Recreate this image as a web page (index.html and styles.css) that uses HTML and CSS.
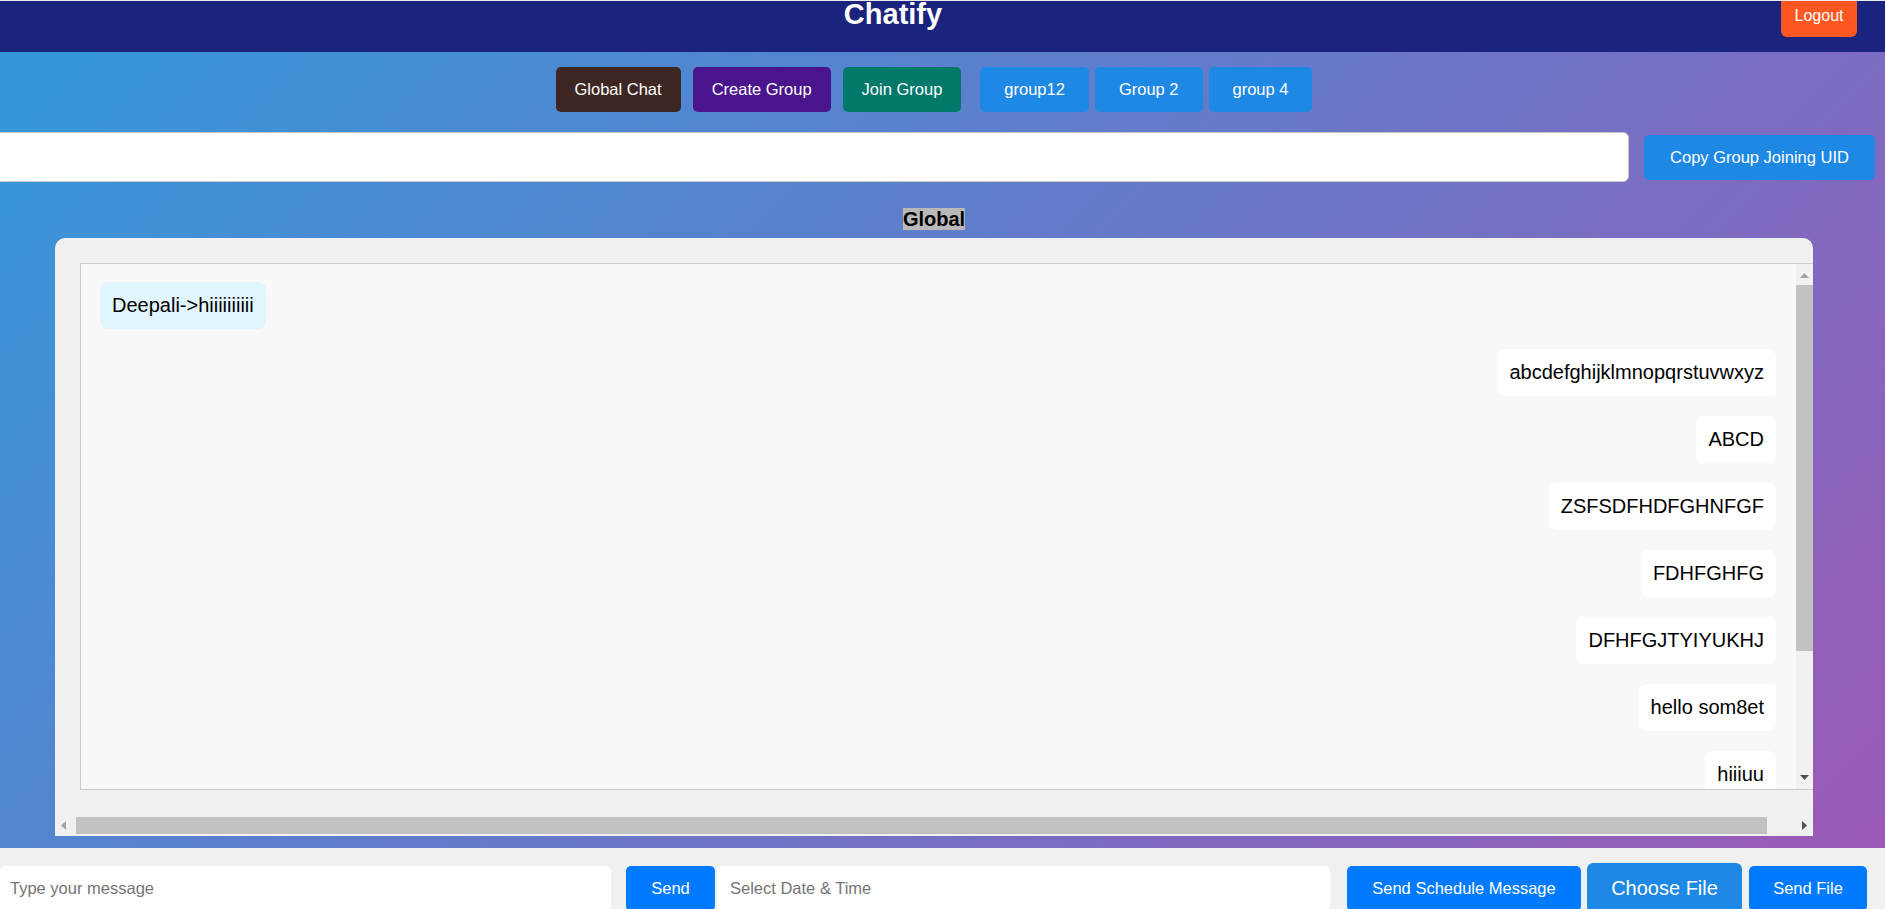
FILE: index.html
```html
<!DOCTYPE html>
<html lang="en">
<head>
<meta charset="utf-8">
<title>Chatify</title>
<link rel="stylesheet" href="styles.css">
</head>
<body>
<header class="topbar">
  <h1 class="brand">Chatify</h1>
  <button class="logout-btn">Logout</button>
</header>

<section class="workspace">
  <div class="main">
    <nav class="room-nav">
      <div class="nav-actions">
        <button class="btn btn-action btn-global">Global Chat</button>
        <button class="btn btn-action btn-create">Create Group</button>
        <button class="btn btn-action btn-join">Join Group</button>
      </div>
      <div class="nav-groups">
        <button class="btn btn-group">group12</button>
        <button class="btn btn-group">Group 2</button>
        <button class="btn btn-group">group 4</button>
      </div>
    </nav>

    <div class="uid-row">
      <input class="uid-input" type="text">
      <button class="btn btn-copy">Copy Group Joining UID</button>
    </div>

    <div class="room-title"><span>Global</span></div>

    <div class="chat-card">
      <div class="chat-viewport">
        <div class="chat-frame">
          <div class="messages">
            <div class="msg msg-in">Deepali-&gt;hiiiiiiiiii</div>
            <div class="msg">abcdefghijklmnopqrstuvwxyz</div>
            <div class="msg">ABCD</div>
            <div class="msg">ZSFSDFHDFGHNFGF</div>
            <div class="msg">FDHFGHFG</div>
            <div class="msg">DFHFGJTYIYUKHJ</div>
            <div class="msg">hello som8et</div>
            <div class="msg">hiiiuu</div>
          </div>
          <div class="vscroll">
            <div class="vs-up"><span class="tri tri-up"></span></div>
            <div class="vs-thumb"></div>
            <div class="vs-space"></div>
            <div class="vs-down"><span class="tri tri-down"></span></div>
          </div>
        </div>
      </div>
      <div class="hscroll">
        <div class="hs-arrow"><span class="tri tri-left"></span></div>
        <div class="hs-thumb"></div>
        <div class="hs-space"></div>
        <div class="hs-arrow"><span class="tri tri-right"></span></div>
      </div>
    </div>
  </div>
</section>

<footer class="composer">
  <div class="composer-row">
    <input class="field msg-field" type="text" placeholder="Type your message">
    <button class="btn btn-send">Send</button>
    <input class="field date-field" type="text" placeholder="Select Date &amp; Time">
    <button class="btn btn-schedule">Send Schedule Message</button>
    <button class="btn btn-choose">Choose File</button>
    <button class="btn btn-sendfile">Send File</button>
  </div>
</footer>
</body>
</html>
```

FILE: styles.css
```css
* {
  box-sizing: border-box;
}

html,
body {
  margin: 0;
}

body {
  background: #f0f0f0;
  font-family: "Liberation Sans", Arial, sans-serif;
  overflow: hidden;
}

/* ---------- header ---------- */
.topbar {
  display: flex;
  align-items: flex-start;
  height: 52px;
  border-top: 1px solid #ececec;
  background: #1a237e;
}

.brand {
  flex: 1;
  margin: 0;
  padding-left: 5px;
  text-align: center;
  color: #fff;
  font-size: 29px;
  font-weight: bold;
  line-height: 26px;
}

.logout-btn {
  flex: none;
  margin-right: 28px;
  width: 76px;
  height: 36px;
  padding: 0 0 8px;
  border: none;
  border-radius: 0 0 6px 6px;
  background: #ff5722;
  color: #fff;
  font-family: inherit;
  font-size: 16px;
  line-height: 19px;
}

/* ---------- gradient workspace ---------- */
.workspace {
  background: linear-gradient(135deg, #3498db, #9b59b6);
  padding: 15px 0 12px;
}

.main {
  width: 1868px;
}

.btn {
  flex: none;
  height: 45px;
  padding: 0;
  border: none;
  border-radius: 5px;
  color: #fff;
  font-family: inherit;
  font-size: 16.5px;
  cursor: pointer;
}

.room-nav {
  display: flex;
  justify-content: center;
}

.nav-actions {
  display: flex;
  gap: 12px;
}

.nav-groups {
  display: flex;
  gap: 6px;
  margin-left: 19px;
}

.btn-action {
  padding: 0 19px;
}

.btn-global {
  background: #3e2723;
}

.btn-create {
  background: #4a148c;
}

.btn-join {
  background: #00796b;
}

.btn-group {
  padding: 0 24px;
  background: #1e88e5;
}

.uid-row {
  display: flex;
  justify-content: center;
  align-items: center;
  gap: 15px;
  margin-top: 20px;
}

.uid-input {
  flex: none;
  width: 1636px;
  height: 50px;
  border: 1px solid #c8c8c8;
  border-radius: 6px;
  background: #fff;
  outline: none;
}

.btn-copy {
  padding: 0 26px;
  background: #1e88e5;
}

.room-title {
  margin-top: 26px;
  text-align: center;
  font-size: 20px;
  font-weight: bold;
  line-height: 23px;
}

.room-title span {
  background: #b9b9b9;
  color: #000;
}

/* ---------- chat card ---------- */
.chat-card {
  display: flex;
  flex-direction: column;
  width: 1758px;
  height: 598px;
  margin: 7px auto 0;
  background: #f0f0f0;
  border-radius: 10px 10px 0 0;
  overflow: hidden;
}

.chat-viewport {
  flex: 1;
  overflow: hidden;
  padding: 25px 0 26px 25px;
}

.chat-frame {
  display: flex;
  width: 1734px;
  height: 527px;
  border: 1px solid #ccc;
  background: #f8f8f8;
}

.messages {
  flex: 1;
  display: flex;
  flex-direction: column;
  align-items: flex-end;
  gap: 20px;
  overflow: hidden;
  padding: 18px 20px 0 19px;
}

.msg {
  flex: none;
  padding: 12px;
  border-radius: 8px;
  background: #fff;
  color: #000;
  font-size: 20px;
  line-height: 23px;
  white-space: nowrap;
}

.msg-in {
  align-self: flex-start;
  background: #e1f5fe;
}

/* fake scrollbars */
.tri {
  display: block;
}

.tri-up {
  width: 9px;
  height: 5px;
  background: #a3a3a3;
  clip-path: polygon(50% 0, 100% 100%, 0 100%);
}

.tri-down {
  width: 9px;
  height: 5px;
  background: #505050;
  clip-path: polygon(0 0, 100% 0, 50% 100%);
}

.tri-left {
  width: 5px;
  height: 9px;
  background: #a3a3a3;
  clip-path: polygon(100% 0, 100% 100%, 0 50%);
}

.tri-right {
  width: 5px;
  height: 9px;
  background: #505050;
  clip-path: polygon(0 0, 100% 50%, 0 100%);
}

.vscroll {
  flex: none;
  display: flex;
  flex-direction: column;
  width: 17px;
  background: #f1f1f1;
}

.vs-up {
  display: flex;
  justify-content: center;
  height: 21px;
  padding-top: 9px;
}

.vs-thumb {
  height: 366px;
  background: #c1c1c1;
}

.vs-space {
  flex: 1;
}

.vs-down {
  display: flex;
  justify-content: center;
  height: 20px;
  padding-top: 6px;
}

.hscroll {
  flex: none;
  display: flex;
  align-items: flex-start;
  height: 20px;
  padding-top: 1px;
}

.hs-arrow {
  display: flex;
  justify-content: center;
  align-items: center;
  width: 17px;
  height: 17px;
}

.hs-thumb {
  width: 1691px;
  height: 17px;
  margin-left: 4px;
  background: #c1c1c1;
}

.hs-space {
  flex: 1;
}

/* ---------- composer ---------- */
.composer {
  padding-top: 15px;
  background: #f0f0f0;
}

.composer-row {
  display: flex;
  align-items: center;
  width: 1868px;
}

.field {
  flex: none;
  height: 45px;
  border: none;
  border-radius: 5px;
  background: #fff;
  color: #222;
  font-family: inherit;
  font-size: 16.5px;
  outline: none;
}

.field::placeholder {
  color: #757575;
}

.msg-field {
  width: 611px;
  padding: 0 10px;
}

.date-field {
  width: 613px;
  margin-left: 2px;
  padding: 0 13px;
}

.btn-send {
  width: 89px;
  margin-left: 15px;
  background: #007bff;
}

.btn-schedule {
  width: 234px;
  margin-left: 17px;
  background: #007bff;
}

.btn-choose {
  width: 155px;
  height: 50px;
  margin-left: 6px;
  border-radius: 6px;
  background: #1e88e5;
  font-size: 20px;
}

.btn-sendfile {
  width: 118px;
  margin-left: 7px;
  background: #007bff;
}
```
